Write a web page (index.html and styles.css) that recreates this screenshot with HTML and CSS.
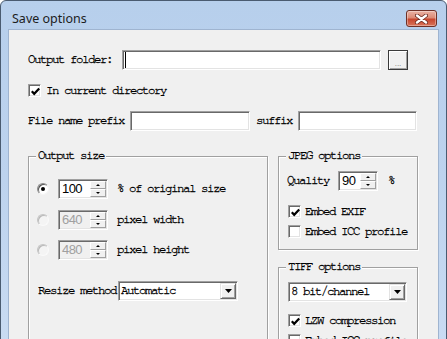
FILE: index.html
```html
<!DOCTYPE html>
<html>
<head>
<meta charset="utf-8">
<title>Save options</title>
<link rel="stylesheet" href="styles.css">
</head>
<body>
<div class="window">
	<div class="titlebar">
		<span class="title">Save options</span>
		<span class="close">
			<svg width="13" height="10" viewBox="0 0 13 10"><path d="M2 1.5L11 8.5M11 1.5L2 8.5" stroke="#6a2a20" stroke-width="4" stroke-linecap="round"/><path d="M2 1.5L11 8.5M11 1.5L2 8.5" stroke="#fff" stroke-width="2.4" stroke-linecap="round"/></svg>
		</span>
	</div>
	<div class="client">
		<div class="row folder-row">
			<span class="folder-label">Output folder:</span>
			<span class="field folder-field"><span class="caret"></span></span>
			<span class="browse">...</span>
		</div>
		<div class="check-row top-check">
			<span class="field check on"><svg width="11" height="11" viewBox="0 0 11 11"><path d="M1.8 5.2L4.2 7.8L9.2 2.4" fill="none" stroke="#000" stroke-width="2.2"/></svg></span>
			<span class="check-text">In current directory</span>
		</div>
		<div class="row name-row">
			<span class="prefix-label">File name prefix</span>
			<span class="field prefix-field"></span>
			<span class="suffix-label">suffix</span>
			<span class="field suffix-field"></span>
		</div>
		<div class="groups">
			<fieldset class="group size-group">
				<legend>Output size</legend>
				<div class="opt-row first">
					<span class="radio on"></span>
					<span class="field spin"><span class="spin-val">100</span><span class="spin-btns"><span class="up"></span><span class="down"></span></span></span>
					<span class="opt-text">% of original size</span>
				</div>
				<div class="opt-row second">
					<span class="radio off"></span>
					<span class="field spin disabled"><span class="spin-val">640</span><span class="spin-btns"><span class="up"></span><span class="down"></span></span></span>
					<span class="opt-text">pixel width</span>
				</div>
				<div class="opt-row third">
					<span class="radio off"></span>
					<span class="field spin disabled"><span class="spin-val">480</span><span class="spin-btns"><span class="up"></span><span class="down"></span></span></span>
					<span class="opt-text">pixel height</span>
				</div>
				<div class="resize-row">
					<span class="resize-label">Resize method</span>
					<span class="field combo resize-combo"><span class="combo-val">Automatic</span><span class="combo-btn"><svg width="7" height="4" viewBox="0 0 7 4"><path d="M0 0H7L3.5 4Z"/></svg></span></span>
				</div>
			</fieldset>
			<div class="side">
				<fieldset class="group jpeg-group">
					<legend>JPEG options</legend>
					<div class="quality-row">
						<span class="quality-label">Quality</span>
						<span class="field spin quality-spin"><span class="spin-val">90</span><span class="spin-btns"><span class="up"></span><span class="down"></span></span></span>
						<span class="pct">%</span>
					</div>
					<div class="check-row group-check first-check">
						<span class="field check on"><svg width="11" height="11" viewBox="0 0 11 11"><path d="M1.8 5.2L4.2 7.8L9.2 2.4" fill="none" stroke="#000" stroke-width="2.2"/></svg></span>
						<span class="check-text">Embed EXIF</span>
					</div>
					<div class="check-row group-check">
						<span class="field check"></span>
						<span class="check-text">Embed ICC profile</span>
					</div>
				</fieldset>
				<fieldset class="group tiff-group">
					<legend>TIFF options</legend>
					<span class="field combo depth-combo"><span class="combo-val">8 bit/channel</span><span class="combo-btn"><svg width="7" height="4" viewBox="0 0 7 4"><path d="M0 0H7L3.5 4Z"/></svg></span></span>
					<div class="check-row group-check lzw-check">
						<span class="field check on"><svg width="11" height="11" viewBox="0 0 11 11"><path d="M1.8 5.2L4.2 7.8L9.2 2.4" fill="none" stroke="#000" stroke-width="2.2"/></svg></span>
						<span class="check-text">LZW compression</span>
					</div>
					<div class="check-row group-check">
						<span class="field check"></span>
						<span class="check-text">Embed ICC profile</span>
					</div>
				</fieldset>
			</div>
		</div>
	</div>
</div>
</body>
</html>
```

FILE: styles.css
```css
*{
	margin: 0;
	padding: 0;
	box-sizing: border-box;
}
body{
	background-color: #fff;
	font: 12.5px/12px "FreeMono", "Nimbus Mono PS", "Liberation Mono", monospace;
	letter-spacing: -1.5px;
	-webkit-text-stroke: 0.3px #000;
	color: #000;
	overflow: hidden;
}
.window{
	width: 447px;
	height: 360px;
	border: 1px solid #4a5b70;
	border-radius: 6px 6px 0 0;
	background: linear-gradient(#b7cfec, #bdd3ee 50%, #cadcf3);
}
.titlebar{
	height: 28px;
	padding: 9px 9px 2px 11px;
	display: flex;
	align-items: center;
	justify-content: space-between;
}
.title{
	font: 12.5px/17px "Noto Sans", sans-serif;
	letter-spacing: 0;
	-webkit-text-stroke: 0;
	color: #1c1c1c;
}
.close{
	width: 31px;
	height: 17px;
	border: 1px solid #6e3026;
	border-radius: 3px;
	background: linear-gradient(#eab2a4, #dc8b76 45%, #c7462e 55%, #d9745a);
	box-shadow: inset 0 0 0 1px rgba(255,255,255,0.35);
	display: flex;
	align-items: center;
	justify-content: center;
}
.close svg{
	display: block;
}
.client{
	margin: 0 7px;
	height: 330px;
	border: 1px solid #9fb4d0;
	background-color: #f0f0f0;
	padding: 20px 0 0 19px;
}
.row{
	display: flex;
	align-items: center;
	height: 20px;
}
.field{
	background-color: #fff;
	border: 1px solid;
	border-color: #a0a0a0 #fff #fff #a0a0a0;
	box-shadow: inset 1px 1px #696969, inset -1px -1px #e3e3e3;
}
.folder-label{
	width: 94px;
}
.folder-field{
	width: 259px;
	height: 20px;
	display: flex;
	align-items: center;
}
.caret{
	width: 1px;
	height: 16px;
	margin-left: 2px;
	background-color: #000;
}
.browse{
	width: 20px;
	height: 20px;
	margin-left: 7px;
	border: 1px solid #3a3a3a;
	box-shadow: inset 1px 1px #fff, inset -1px -1px #a0a0a0;
	font: 8px/8px "Liberation Sans", sans-serif;
	letter-spacing: 0;
	-webkit-text-stroke: 0;
	color: #777;
	text-align: center;
	padding-top: 9px;
}
.check-row{
	display: flex;
	align-items: center;
	height: 13px;
}
.top-check{
	margin-top: 14px;
}
.check{
	width: 13px;
	height: 13px;
	padding: 1px;
}
.check svg{
	display: block;
}
.check-text{
	margin-left: 5px;
}
.name-row{
	margin-top: 14px;
}
.prefix-label{
	width: 102px;
}
.prefix-field{
	width: 120px;
	height: 20px;
}
.suffix-label{
	margin-left: 6px;
	width: 42px;
}
.suffix-field{
	width: 119px;
	height: 20px;
}
.groups{
	display: flex;
	gap: 10px;
	margin-top: 19px;
}
.group{
	border: 1px solid #a0a0a0;
	box-shadow: inset 1px 1px #fff, 1px 1px #fff;
	padding: 0 7px;
}
.group legend{
	padding: 0 2px;
	line-height: 12px;
	background-color: #f0f0f0;
}
.size-group{
	width: 240px;
	height: 200px;
}
.opt-row{
	display: flex;
	align-items: center;
	height: 20px;
	margin-left: 1px;
	margin-top: 10px;
}
.opt-row.first{
	margin-top: 17px;
}
.opt-row.second{
	margin-top: 11px;
}
.radio{
	position: relative;
	width: 12px;
	height: 12px;
	border-radius: 50%;
	border: 1px solid;
	border-color: #8a8a8a #f4f4f4 #f4f4f4 #8a8a8a;
	background-color: #fff;
	box-shadow: inset 1px 1px #555;
	margin-right: 9px;
}
.radio.off{
	border-color: #c4c4c4 #fafafa #fafafa #c4c4c4;
	box-shadow: inset 1px 1px #b8b8b8;
	background-color: #f4f4f4;
}
.radio.on::after{
	content: "";
	position: absolute;
	left: 3px;
	top: 3px;
	width: 4px;
	height: 4px;
	border-radius: 50%;
	background-color: #000;
}
.spin{
	width: 50px;
	height: 20px;
	padding: 1px;
	display: flex;
}
.spin-val{
	flex: 1;
	padding-left: 2px;
	font: 13px/16px "Liberation Sans", sans-serif;
	letter-spacing: -0.6px;
	-webkit-text-stroke: 0;
}
.spin-btns{
	width: 16px;
	display: flex;
	flex-direction: column;
}
.spin-btns span{
	height: 8px;
	background-color: #f0f0f0;
	border: 1px solid;
	border-color: #fff #a0a0a0 #a0a0a0 #fff;
	display: flex;
	align-items: center;
	justify-content: center;
}
.spin-btns .up::after{
	content: "";
	border-left: 2px solid transparent;
	border-right: 2px solid transparent;
	border-bottom: 2px solid #000;
}
.spin-btns .down::after{
	content: "";
	border-left: 2px solid transparent;
	border-right: 2px solid transparent;
	border-top: 2px solid #000;
}
.spin.disabled{
	background-color: #f0f0f0;
}
.spin.disabled .spin-val{
	color: #a0a0a0;
}
.opt-text{
	margin-left: 9px;
}
.resize-row{
	display: flex;
	align-items: center;
	height: 20px;
	margin: 21px 0 0 2px;
}
.resize-label{
	width: 80px;
}
.combo{
	height: 20px;
	padding: 1px;
	display: flex;
}
.resize-combo{
	width: 120px;
}
.combo-val{
	flex: 1;
	padding-left: 1px;
	line-height: 16px;
}
.combo-btn{
	width: 16px;
	height: 16px;
	background-color: #f0f0f0;
	border: 1px solid;
	border-color: #e3e3e3 #696969 #696969 #e3e3e3;
	box-shadow: inset 1px 1px #fff, inset -1px -1px #a0a0a0;
	display: flex;
	align-items: center;
	justify-content: center;
}
.combo-btn svg{
	display: block;
}
.side{
	width: 140px;
}
.jpeg-group{
	padding-bottom: 11px;
}
.quality-row{
	display: flex;
	align-items: center;
	height: 20px;
	margin: 9px 0 0 1px;
}
.quality-label{
	width: 51px;
}
.quality-spin{
	width: 40px;
}
.pct{
	margin-left: 10px;
}
.group-check{
	margin: 7px 0 0 2px;
}
.group-check .check-text{
	margin-left: 4px;
}
.first-check{
	margin-top: 14px;
}
.tiff-group{
	margin-top: 11px;
	height: 120px;
}
.depth-combo{
	width: 119px;
	margin: 9px 0 0 2px;
}
.lzw-check{
	margin-top: 12px;
}
```
